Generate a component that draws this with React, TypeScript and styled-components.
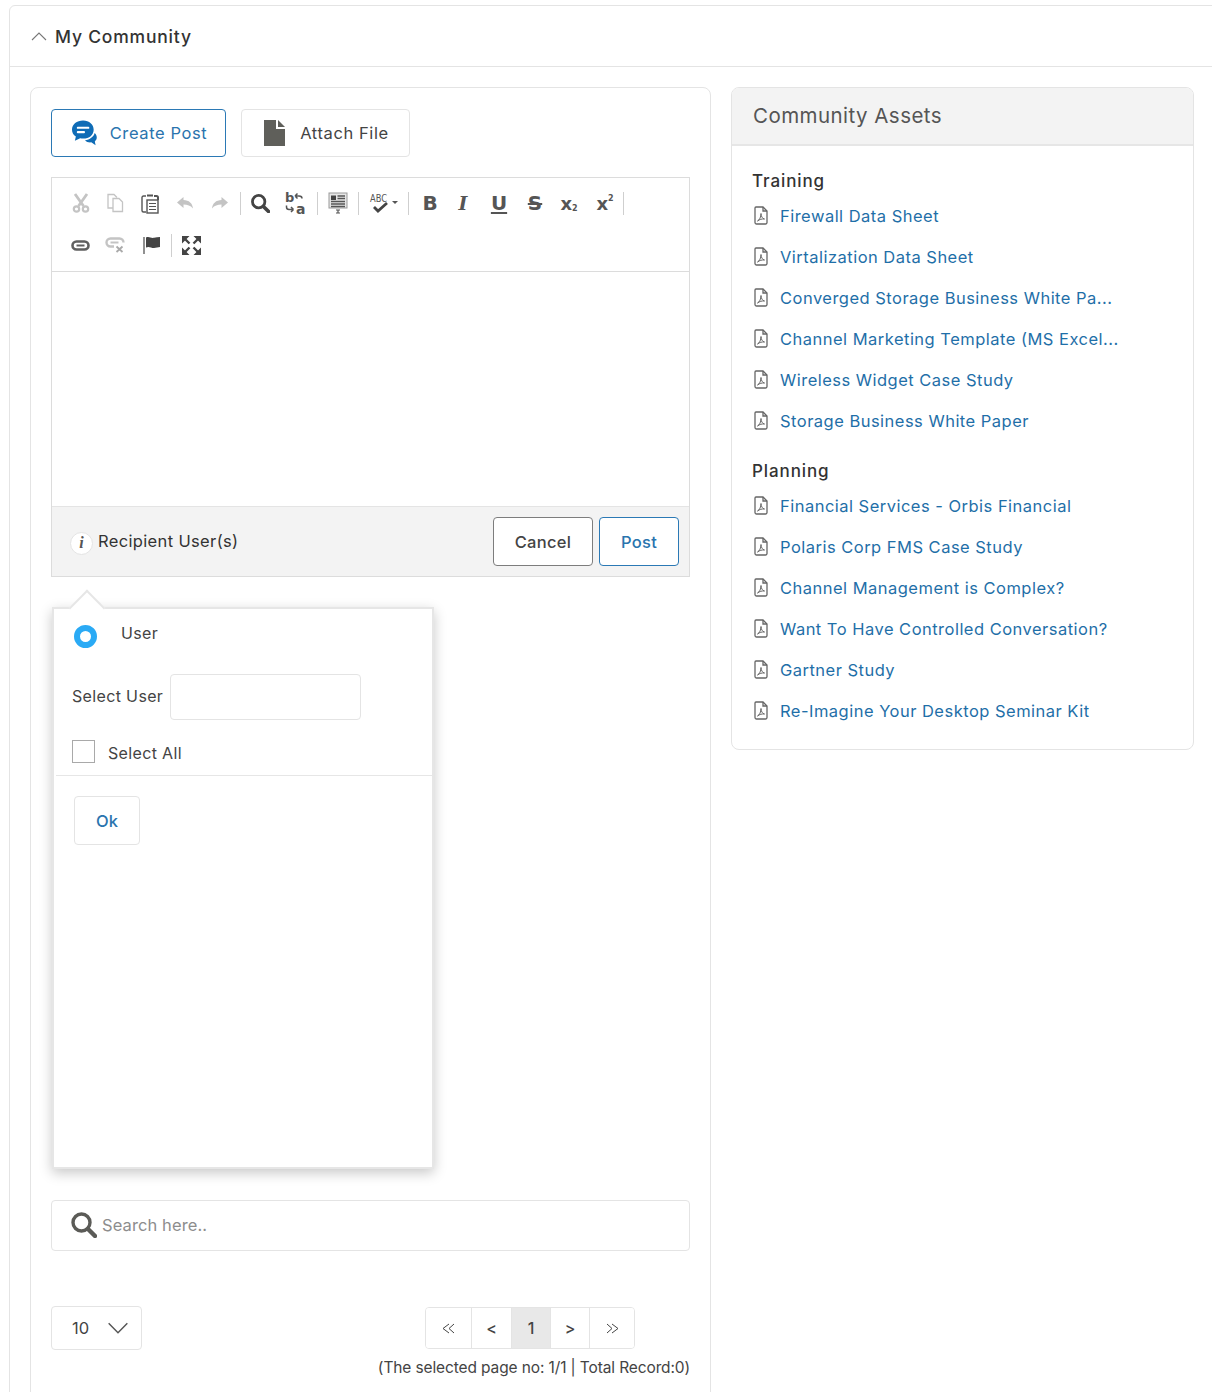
import React from "react";
import styled, { createGlobalStyle } from "styled-components";

const Global = createGlobalStyle`
  html, body { margin: 0; padding: 0; background: #fff; }
  body { font-family: Inter, "Noto Sans", "Liberation Sans", sans-serif; color: #333; }
  #root { height: 1392px; overflow: hidden; }
  * { box-sizing: border-box; }
`;

const Accordion = styled.section`
  margin: 5px -12px 0 9px;
  border: 1px solid #e4e4e4;
  border-top-left-radius: 6px;
`;
const AccordionHead = styled.header`
  height: 61px;
  display: flex;
  align-items: center;
  gap: 8px;
  padding-left: 21px;
  border-bottom: 1px solid #e4e4e4;
  font-size: 17.5px;
  font-weight: 500;
  letter-spacing: 0.8px;
  color: #333;
`;
const Columns = styled.div`
  display: flex;
  align-items: flex-start;
  gap: 20px;
  padding: 20px 0 0 20px;
`;
const MainCard = styled.div`
  width: 681px;
  flex: none;
  border: 1px solid #e4e4e4;
  border-radius: 8px 8px 0 0;
  padding: 21px 20px 60px;
`;
const ActionRow = styled.div`
  display: flex;
  gap: 15px;
  margin-bottom: 20px;
`;
const ActionButton = styled.button<{ $primary?: boolean; $w: number; $gap: number }>`
  width: ${(p) => p.$w}px;
  height: 48px;
  display: flex;
  align-items: center;
  justify-content: center;
  gap: ${(p) => p.$gap}px;
  padding: 0 0 0 2px;
  background: #fff;
  border: 1px solid ${(p) => (p.$primary ? "#2b79b5" : "#e4e4e4")};
  border-radius: 4px;
  font: 400 16.5px Inter, "Noto Sans", sans-serif;
  letter-spacing: 0.6px;
  color: ${(p) => (p.$primary ? "#2a74ae" : "#444")};
`;
const Editor = styled.div`
  border: 1px solid #dcdcdc;
`;
const Toolbar = styled.div`
  height: 94px;
  padding: 4px 0 0 12px;
  border-bottom: 1px solid #dcdcdc;
`;
const ToolRow = styled.div`
  height: 42px;
  display: flex;
  align-items: center;
`;
const Tool = styled.span<{ $w: number; $off?: boolean }>`
  width: ${(p) => p.$w}px;
  flex: none;
  height: 24px;
  display: flex;
  align-items: center;
  justify-content: center;
  color: ${(p) => (p.$off ? "#c4c4c4" : "#555")};
`;
const GlyphTool = styled(Tool)<{ $italic?: boolean; $under?: boolean; $strike?: boolean; $size?: number }>`
  font: ${(p) => (p.$italic ? "italic 700" : "700")} ${(p) => p.$size ?? 20}px
    ${(p) => (p.$italic ? '"DejaVu Serif"' : '"DejaVu Sans"')}, sans-serif;
  text-decoration: ${(p) => (p.$under ? "underline" : p.$strike ? "line-through" : "none")};
  text-underline-offset: 2px;
  color: #555;
`;
const Script = styled.span<{ $up?: boolean }>`
  font-size: 8px;
  font-weight: 600;
  position: relative;
  top: ${(p) => (p.$up ? -5 : 5)}px;
`;
const ToolSep = styled.span`
  width: 1px;
  height: 23px;
  flex: none;
  margin: 0 2px;
  background: #cfcfcf;
`;
const Surface = styled.div`
  height: 234px;
  background: #fff;
`;
const EditorFoot = styled.div`
  height: 70px;
  display: flex;
  align-items: center;
  padding: 0 10px 0 18px;
  background: #f3f3f3;
  border-top: 1px solid #e4e4e4;
`;
const InfoBadge = styled.span`
  width: 23px;
  height: 23px;
  flex: none;
  margin-right: 5px;
  margin-top: 3px;
  border-radius: 50%;
  background: #fff;
  border: 1px solid #e4e4e4;
  display: flex;
  align-items: center;
  justify-content: center;
  font: italic 700 16px "Liberation Serif", serif;
  color: #555;
`;
const FootLabel = styled.span`
  flex: 1;
  margin-top: -2px;
  font-size: 16.5px;
  font-weight: 400;
  letter-spacing: 0.35px;
  color: #333;
`;
const FootButton = styled.button<{ $w: number; $primary?: boolean }>`
  width: ${(p) => p.$w}px;
  height: 49px;
  margin-left: 6px;
  background: #fff;
  border: 1px solid ${(p) => (p.$primary ? "#2b79b5" : "#7d7d7d")};
  border-radius: 4px;
  font: 500 16.5px Inter, "Noto Sans", sans-serif;
  letter-spacing: 0.3px;
  color: ${(p) => (p.$primary ? "#2a74ae" : "#444")};
`;
const Popover = styled.div`
  position: relative;
  width: 382px;
  height: 562px;
  margin: 30px 0 0 1px;
  background: #fff;
  border: 2px solid #e6e6e6;
  box-shadow: 0 4px 12px rgba(0, 0, 0, 0.22);
  &::before {
    content: "";
    position: absolute;
    left: 20px;
    top: -14px;
    width: 24px;
    height: 24px;
    background: #fff;
    border-left: 2px solid #e6e6e6;
    border-top: 2px solid #e6e6e6;
    transform: rotate(45deg);
  }
`;
const PopoverBody = styled.div`
  position: relative;
  padding: 15px 0 0 20px;
`;
const RadioRow = styled.div`
  display: flex;
  align-items: flex-start;
  height: 50px;
`;
const RadioDot = styled.span`
  width: 23px;
  height: 23px;
  border-radius: 50%;
  background: #fff;
  border: 6.5px solid #2aaaf5;
  margin-right: 24px;
  margin-top: 1px;
`;
const PopLabel = styled.span`
  font-size: 16px;
  font-weight: 400;
  letter-spacing: 0.35px;
  color: #444;
`;
const UserLabel = styled(PopLabel)`
  margin-top: -1px;
`;
const SelectLabel = styled(PopLabel)`
  margin-top: -2px;
`;
const AllLabel = styled(PopLabel)`
  margin-top: 2px;
`;
const SelectRow = styled.div`
  display: flex;
  align-items: center;
  gap: 7px;
  margin-left: -2px;
  margin-bottom: 20px;
`;
const TextBox = styled.div`
  width: 191px;
  height: 46px;
  border: 1px solid #e4e4e4;
  border-radius: 4px;
`;
const CheckRow = styled.div`
  display: flex;
  align-items: center;
  gap: 13px;
  margin-left: -2px;
  height: 23px;
`;
const CheckBox = styled.span`
  width: 23px;
  height: 23px;
  border: 1px solid #a9a9a9;
`;
const PopDivider = styled.div`
  height: 1px;
  margin: 12px 0 20px -18px;
  background: #e6e6e6;
`;
const OkButton = styled.button`
  width: 66px;
  height: 49px;
  display: block;
  background: #fff;
  border: 1px solid #e4e4e4;
  border-radius: 4px;
  font: 500 16.5px Inter, "Noto Sans", sans-serif;
  color: #2a74ae;
`;
const SearchBox = styled.div`
  height: 51px;
  margin-top: 31px;
  padding-bottom: 2px;
  display: flex;
  align-items: center;
  gap: 5px;
  padding-left: 19px;
  border: 1px solid #e4e4e4;
  border-radius: 4px;
  font-size: 16.5px;
  letter-spacing: 0.1px;
  color: #8d8d8d;
`;
const ListBar = styled.div`
  display: flex;
  align-items: flex-start;
  margin-top: 55px;
`;
const PageSize = styled.div`
  width: 91px;
  height: 44px;
  display: flex;
  align-items: center;
  gap: 18px;
  padding-left: 20px;
  border: 1px solid #e4e4e4;
  border-radius: 4px;
  font-size: 16.5px;
  color: #444;
`;
const Pager = styled.div`
  display: flex;
  height: 42px;
  margin: 1px 0 0 283px;
  border: 1px solid #e4e4e4;
  border-radius: 4px;
  overflow: hidden;
`;
const PageCell = styled.span<{ $w: number; $active?: boolean }>`
  width: ${(p) => p.$w}px;
  display: flex;
  align-items: center;
  justify-content: center;
  font-size: 16px;
  font-weight: 500;
  color: #444;
  background: ${(p) => (p.$active ? "#e8e8e8" : "#fff")};
  & + & { border-left: 1px solid #e4e4e4; }
`;
const RecordText = styled.div`
  margin-top: 8px;
  text-align: right;
  font-size: 15.5px;
  letter-spacing: -0.12px;
  color: #444;
  line-height: 20px;
`;
const SideCard = styled.aside`
  width: 463px;
  flex: none;
  height: 663px;
  border: 1px solid #e4e4e4;
  border-radius: 8px;
  overflow: hidden;
`;
const SideHead = styled.h2`
  margin: 0;
  height: 58px;
  padding: 0 0 2px 21px;
  display: flex;
  align-items: center;
  background: #f3f3f3;
  border-bottom: 2px solid #e6e6e6;
  font-size: 20.5px;
  font-weight: 400;
  letter-spacing: 0.45px;
  color: #555;
`;
const SideBody = styled.div`
  padding: 25px 0 0 20px;
`;
const GroupTitle = styled.h3`
  margin: 0;
  height: 20px;
  line-height: 20px;
  font-size: 17px;
  font-weight: 500;
  letter-spacing: 0.9px;
  color: #333;
`;
const AssetList = styled.ul`
  list-style: none;
  margin: 0 0 20px;
  padding: 4px 0 0 1px;
`;
const AssetItem = styled.li`
  height: 41px;
  display: flex;
  align-items: center;
  gap: 11px;
  font-size: 16.5px;
  letter-spacing: 0.48px;
  color: #1f6fa8;
  font-weight: 400;
  white-space: nowrap;
`;

const PdfIcon = () => (
  <svg width="16" height="19" viewBox="0 0 16 19" fill="none" stroke="#666" strokeWidth="1.3">
    <path d="M3 1h7l4 4v11.5a1.5 1.5 0 0 1-1.5 1.5h-9A1.5 1.5 0 0 1 2 16.5V2a1 1 0 0 1 1-1z" />
    <path d="M10 1v4h4" />
    <path d="M4.5 15c2-1 3.500-4 3.500-7.500 0 3 1.500 5 3.500 5.500-2.500-.3-5 .4-7 2z" strokeWidth="1" />
  </svg>
);
const Chevron = ({ up = false, w = 16, h = 9, c = "#777" }: { up?: boolean; w?: number; h?: number; c?: string }) => (
  <svg width={w} height={h} viewBox="0 0 16 9" fill="none" stroke={c} strokeWidth="1.1">
    <path d={up ? "M1 8l7-7 7 7" : "M1 1l7 7 7-7"} />
  </svg>
);
const ChatIcon = () => (
  <svg width="26" height="26" viewBox="0 0 27 26">
    <path fill="#0f6cb6" d="M11.500 0C5 0 0 4 0 9.500c0 3 1.500 5.500 4 7.200L3 21l5.500-2.500c1 .2 2 .3 3 .3 6.500 0 11-4 11-9.300S18 0 11.500 0z" />
    <rect x="5" y="6.500" width="13" height="2.200" rx="1" fill="#fff" />
    <rect x="5" y="11" width="8.500" height="2.200" rx="1" fill="#fff" />
    <path fill="#0f6cb6" d="M23.500 13c-1 4-5 7-10 7.500 1.500 1.800 4 2.500 6.500 2.200l4.500 3-.8-4c2.500-2 3-5.700-.2-8.700z" />
  </svg>
);
const FileIcon = () => (
  <svg width="21" height="26" viewBox="0 0 21 26">
    <path fill="#5f5f5a" d="M0 0h12v9h9v17H0z" />
    <path fill="#5f5f5a" d="M14 0l7 7h-7z" />
  </svg>
);
const SearchIcon = ({ s = 26, sw = 3.4, c = "#5b5b57" }: { s?: number; sw?: number; c?: string }) => (
  <svg width={s} height={s} viewBox="0 0 26 26" fill="none" stroke={c} strokeWidth={sw} strokeLinecap="round">
    <circle cx="10.500" cy="10.500" r="8.500" />
    <path d="M17 17l7 7" strokeWidth={sw * 1.3} />
  </svg>
);
const Cut = () => (
  <svg width="18" height="20" viewBox="0 0 18 20" fill="none" stroke="currentColor" strokeWidth="2.800">
    <path d="M3 1l8.500 12M15 1L6.500 13" />
    <circle cx="4.500" cy="16" r="2.700" strokeWidth="2.200" />
    <circle cx="13.500" cy="16" r="2.700" strokeWidth="2.200" />
  </svg>
);
const Copy = () => (
  <svg width="18" height="20" viewBox="0 0 18 20" fill="none" stroke="currentColor" strokeWidth="1.300">
    <path d="M7 15H2V1.500h6l3 3" />
    <path d="M7 5.500h6l3.500 3.500v9.500H7z" />
  </svg>
);
const Paste = () => (
  <svg width="18" height="21" viewBox="0 0 18 21" fill="none" stroke="currentColor" strokeWidth="1.400">
    <path d="M5 3H2.500A1.500 1.500 0 0 0 1 4.500v13A1.500 1.500 0 0 0 2.500 19H5" />
    <path d="M6 2.500h6M13 3h2.500A1.500 1.500 0 0 1 17 4.500V7" strokeWidth="2" />
    <rect x="6" y="7" width="11" height="13" />
    <path d="M8 10.500h7M8 13.500h7M8 16.500h7" strokeWidth="1.100" />
  </svg>
);
const Undo = ({ flip = false }: { flip?: boolean }) => (
  <svg width="18" height="14" viewBox="0 0 18 14" style={flip ? { transform: "scaleX(-1)" } : undefined}>
    <path fill="currentColor" d="M7.500 1L1 6.500 7.500 12V8.500c4 0 7 1 9.500 4-.5-5-4-8.500-9.500-8.500z" />
  </svg>
);
const Replace = () => (
  <svg width="22" height="24" viewBox="0 0 22 24">
    <text x="0" y="11" fontFamily="DejaVu Sans" fontSize="13" fontWeight="600" fill="#555">b</text>
    <text x="11" y="22.500" fontFamily="DejaVu Sans" fontSize="14" fontWeight="600" fill="#555">a</text>
    <g fill="none" stroke="#555" strokeWidth="1.500">
      <path d="M10 5h4c2 0 3 1 3 2.500M10 5l2.500-2.500M10 5l2.500 2.500" />
      <path d="M1.500 14.500v1.500c0 1.500 1 2.500 2.500 2.500h4.500M8.500 18.500L6 16M8.500 18.500L6 21" />
    </g>
  </svg>
);
const SelectAll = () => (
  <svg width="20" height="22" viewBox="0 0 20 22" fill="none" stroke="#555">
    <rect x="1" y="1" width="18" height="15" fill="#e6e6e6" stroke="#999" />
    <path d="M3 3.500h5V8H3z" fill="#444" stroke="none" />
    <path d="M9.500 4h7.500M9.500 6.500h7.500M3 9.500h14M3 12h14M3 14.500h14" strokeWidth="1.400" />
    <path d="M8 18h4M8 21h4M10 18v3" strokeWidth="1.200" />
  </svg>
);
const Spell = () => (
  <svg width="30" height="22" viewBox="0 0 30 22">
    <text x="1" y="10" fontFamily="DejaVu Sans" fontSize="11" fontWeight="500" fill="#555" textLength="17" lengthAdjust="spacingAndGlyphs">ABC</text>
    <path d="M5 15l4 4 9-8" fill="none" stroke="#444" strokeWidth="2.800" />
    <path d="M23 9h6l-3 3z" fill="#555" />
  </svg>
);
const LinkIcon = () => (
  <svg width="19" height="11" viewBox="0 0 19 11" fill="none" stroke="#5f5f5f" strokeWidth="2.600">
    <rect x="1.500" y="1.500" width="16" height="8" rx="4" />
    <path d="M5.500 5.500h8" strokeWidth="2" />
  </svg>
);
const Unlink = () => (
  <svg width="20" height="16" viewBox="0 0 20 16" fill="none" stroke="#c4c4c4" strokeWidth="2.400">
    <path d="M9 9.500H5.500a4 4 0 0 1 0-8h9a4 4 0 0 1 4 4" />
    <path d="M5.500 5.500h8" strokeWidth="2" />
    <path d="M11.500 9.500l6 5.500M17.500 9.500l-6 5.500" stroke="#aaa" strokeWidth="1.800" />
  </svg>
);
const FlagIcon = () => (
  <svg width="18" height="19" viewBox="0 0 18 19">
    <path d="M1 1v17" stroke="#555" strokeWidth="1.300" />
    <path fill="#444" d="M3 1.500c3-1.500 5 1 8 .3 2-.4 4-.8 6-.8v10c-2 .2-4 1-6 1-3 0-5-2-8-.5z" />
  </svg>
);
const Maximize = () => (
  <svg width="19" height="19" viewBox="0 0 19 19">
    <path fill="#444" d="M0 0h7.500L0 7.500zM19 0h-7.500L19 7.500zM0 19h7.500L0 11.500zM19 19h-7.500L19 11.500z" />
    <path stroke="#444" strokeWidth="2.400" d="M3 3l4.500 4.500M16 3l-4.500 4.500M3 16l4.500-4.500M16 16l-4.500-4.500" />
  </svg>
);
const DoubleChevron = ({ left = false }: { left?: boolean }) => (
  <svg width="13" height="11" viewBox="0 0 13 11" fill="none" stroke="#444" strokeWidth="1" style={left ? { transform: "scaleX(-1)" } : undefined}>
    <path d="M1 1l5 4.500-5 4.500M6 1l6 4.500-6 4.500" />
  </svg>
);

const firstGroup = [
  "Firewall Data Sheet",
  "Virtalization Data Sheet",
  "Converged Storage Business White Pa...",
  "Channel Marketing Template (MS Excel...",
  "Wireless Widget Case Study",
  "Storage Business White Paper",
];
const secondGroup = [
  "Financial Services - Orbis Financial",
  "Polaris Corp FMS Case Study",
  "Channel Management is Complex?",
  "Want To Have Controlled Conversation?",
  "Gartner Study",
  "Re-Imagine Your Desktop Seminar Kit",
];

const Assets = ({ title, items }: { title: string; items: string[] }) => (
  <>
    <GroupTitle>{title}</GroupTitle>
    <AssetList>
      {items.map((t) => (
        <AssetItem key={t}>
          <PdfIcon />
          {t}
        </AssetItem>
      ))}
    </AssetList>
  </>
);

export default function App() {
  return (
    <>
      <Global />
      <Accordion>
        <AccordionHead>
          <Chevron up />
          My Community
        </AccordionHead>
        <Columns>
          <MainCard>
            <ActionRow>
              <ActionButton $primary $w={175} $gap={12}>
                <ChatIcon />
                Create Post
              </ActionButton>
              <ActionButton $w={169} $gap={15}>
                <FileIcon />
                Attach File
              </ActionButton>
            </ActionRow>
            <Editor>
              <Toolbar>
                <ToolRow>
                  <Tool $w={34} $off><Cut /></Tool>
                  <Tool $w={34} $off><Copy /></Tool>
                  <Tool $w={36}><Paste /></Tool>
                  <Tool $w={34} $off><Undo /></Tool>
                  <Tool $w={36} $off><Undo flip /></Tool>
                  <ToolSep />
                  <Tool $w={34}><SearchIcon s={19} sw={3.8} c="#444" /></Tool>
                  <Tool $w={38}><Replace /></Tool>
                  <ToolSep />
                  <Tool $w={36}><SelectAll /></Tool>
                  <ToolSep />
                  <Tool $w={45}><Spell /></Tool>
                  <ToolSep />
                  <GlyphTool $w={38}>B</GlyphTool>
                  <GlyphTool $w={28} $italic $size={19}>I</GlyphTool>
                  <GlyphTool $w={44} $under>U</GlyphTool>
                  <GlyphTool $w={28} $strike>S</GlyphTool>
                  <GlyphTool $w={40} $size={18}>x<Script>2</Script></GlyphTool>
                  <GlyphTool $w={32} $size={18}>x<Script $up>2</Script></GlyphTool>
                  <ToolSep />
                </ToolRow>
                <ToolRow>
                  <Tool $w={32}><LinkIcon /></Tool>
                  <Tool $w={38}><Unlink /></Tool>
                  <Tool $w={35}><FlagIcon /></Tool>
                  <ToolSep />
                  <Tool $w={34}><Maximize /></Tool>
                </ToolRow>
              </Toolbar>
              <Surface />
              <EditorFoot>
                <InfoBadge>i</InfoBadge>
                <FootLabel>Recipient User(s)</FootLabel>
                <FootButton $w={100}>Cancel</FootButton>
                <FootButton $w={80} $primary>Post</FootButton>
              </EditorFoot>
            </Editor>
            <Popover>
              <PopoverBody>
                <RadioRow>
                  <RadioDot />
                  <UserLabel>User</UserLabel>
                </RadioRow>
                <SelectRow>
                  <SelectLabel>Select User</SelectLabel>
                  <TextBox />
                </SelectRow>
                <CheckRow>
                  <CheckBox />
                  <AllLabel>Select All</AllLabel>
                </CheckRow>
                <PopDivider />
                <OkButton>Ok</OkButton>
              </PopoverBody>
            </Popover>
            <SearchBox>
              <SearchIcon />
              Search here..
            </SearchBox>
            <ListBar>
              <PageSize>
                10
                <Chevron w={22} h={12} c="#555" />
              </PageSize>
              <Pager>
                <PageCell $w={45}><DoubleChevron left /></PageCell>
                <PageCell $w={40}>&lt;</PageCell>
                <PageCell $w={39} $active>1</PageCell>
                <PageCell $w={39}>&gt;</PageCell>
                <PageCell $w={45}><DoubleChevron /></PageCell>
              </Pager>
            </ListBar>
            <RecordText>(The selected page no: 1/1 | Total Record:0)</RecordText>
          </MainCard>
          <SideCard>
            <SideHead>Community Assets</SideHead>
            <SideBody>
              <Assets title="Training" items={firstGroup} />
              <Assets title="Planning" items={secondGroup} />
            </SideBody>
          </SideCard>
        </Columns>
      </Accordion>
    </>
  );
}
